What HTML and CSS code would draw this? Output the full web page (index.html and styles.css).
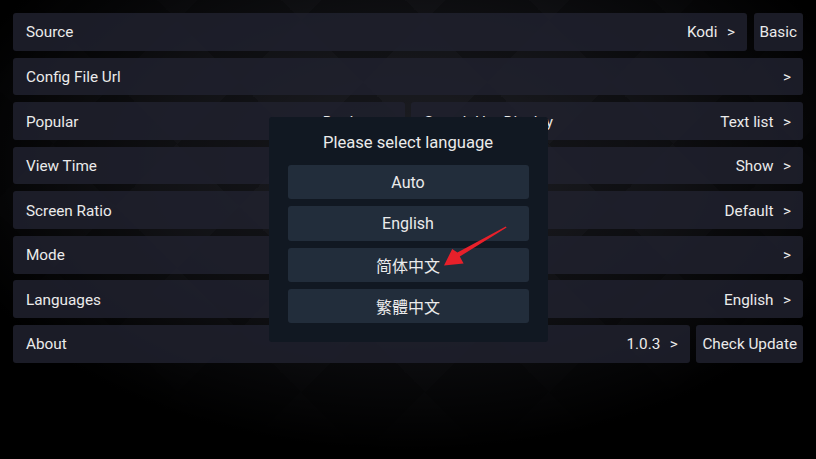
FILE: index.html
```html
<!DOCTYPE html>
<html lang="en">
<head>
    <meta charset="UTF-8">
    <meta name="viewport" content="width=device-width, initial-scale=1.0">
    <title>Settings</title>
    <link rel="stylesheet" href="styles.css">
</head>
<body>

    <!-- Danh sách cài đặt -->
    <div class="settings">
        <div class="row">
            <div class="item"><span>Source</span><span class="value">Kodi<i class="go">&gt;</i></span></div>
            <div class="btn">Basic</div>
        </div>
        <div class="row">
            <div class="item"><span>Config File Url</span><span class="value"><i class="go">&gt;</i></span></div>
        </div>
        <div class="row">
            <div class="item"><span>Popular</span><span class="value">Douban<i class="go">&gt;</i></span></div>
            <div class="item"><span>Search Hot Display</span><span class="value">Text list<i class="go">&gt;</i></span></div>
        </div>
        <div class="row">
            <div class="item"><span>View Time</span><span class="value">Show<i class="go">&gt;</i></span></div>
        </div>
        <div class="row">
            <div class="item"><span>Screen Ratio</span><span class="value">Default<i class="go">&gt;</i></span></div>
        </div>
        <div class="row">
            <div class="item"><span>Mode</span><span class="value"><i class="go">&gt;</i></span></div>
        </div>
        <div class="row">
            <div class="item"><span>Languages</span><span class="value">English<i class="go">&gt;</i></span></div>
        </div>
        <div class="row">
            <div class="item"><span>About</span><span class="value">1.0.3<i class="go">&gt;</i></span></div>
            <div class="btn">Check Update</div>
        </div>
    </div>

    <!-- Hộp chọn ngôn ngữ -->
    <div class="overlay">
        <div class="dialog">
            <div class="dialog-title">Please select language</div>
            <div class="choice">Auto</div>
            <div class="choice">English</div>
            <div class="choice cjk">简体中文</div>
            <div class="choice cjk">繁體中文</div>
        </div>
    </div>

    <!-- Mũi tên chú thích -->
    <svg class="note" viewBox="0 0 816 459" width="816" height="459">
        <polygon fill="#e8202a" points="506.6,227.6 459.8,256.4 463.6,263.6 444,265.6 452.2,249 457.4,252.6 505.8,226.4"/>
    </svg>

</body>
</html>
```

FILE: styles.css
```css
/* Nền chung */
body {
    margin: 0;
    height: 100vh;
    overflow: hidden;
    font-family: Roboto, "Noto Sans", sans-serif;
    font-size: 15.3px;
    color: #ebebeb;
    background-color: #000;
    background-image:
        radial-gradient(ellipse 58% 62% at 50% 36%, rgba(0, 0, 0, 0) 0%, rgba(0, 0, 0, 0.45) 55%, #000 100%),
        repeating-conic-gradient(from 45deg, #1e1f25 0 25%, #18191e 0 50%);
    background-size: 100% 100%, 124px 124px;
    background-position: 0 0, 53px 20px;
}

/* Danh sách cài đặt */
.settings {
    display: flex;
    flex-direction: column;
    gap: 6.9px;
    padding: 13px;
}

.row {
    display: flex;
    gap: 6.6px;
    height: 37.7px;
}

.item {
    flex: 1;
    display: flex;
    align-items: center;
    justify-content: space-between;
    padding: 1px 12px 0 13px;
    border-radius: 3px;
    background-color: rgba(31, 33, 45, 0.86);
}

.value {
    display: flex;
    align-items: center;
}

.go {
    font-style: normal;
    margin-left: 9.5px;
}

.btn {
    display: flex;
    align-items: center;
    padding: 1px 6px 0;
    border-radius: 3px;
    background-color: rgba(31, 33, 45, 0.86);
}

/* Hộp chọn ngôn ngữ */
.overlay {
    position: fixed;
    inset: 0;
    display: flex;
    justify-content: center;
    align-items: center;
}

.dialog {
    width: 279px;
    box-sizing: border-box;
    padding: 0 19px 19px;
    border-radius: 3px;
    background-color: #111822;
    display: flex;
    flex-direction: column;
    gap: 6.8px;
}

.dialog-title {
    text-align: center;
    font-size: 16.6px;
    line-height: 24px;
    padding: 14px 0 3.5px;
}

.choice {
    height: 34.5px;
    display: flex;
    justify-content: center;
    align-items: center;
    font-size: 16px;
    border-radius: 3px;
    background-color: #222d3b;
}

.cjk {
    font-family: "Noto Sans CJK SC", sans-serif;
}

/* Mũi tên chú thích */
.note {
    position: fixed;
    top: 0;
    left: 0;
    pointer-events: none;
}
```
